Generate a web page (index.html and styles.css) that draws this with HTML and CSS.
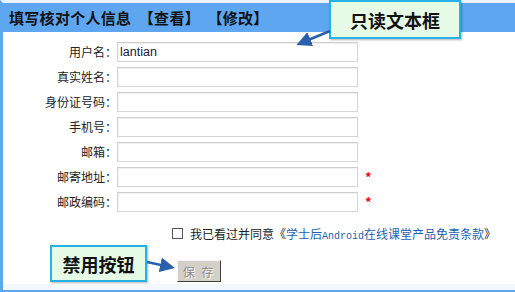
FILE: index.html
```html
<!DOCTYPE html>
<html lang="zh-CN">
  <head>
    <meta charset="utf-8">
    <title>填写核对个人信息</title>
    <link rel="stylesheet" href="styles.css">
  </head>
  <body>
    <div class="frame">
      <div class="header">填写核对个人信息&nbsp;&nbsp;【查看】&nbsp;&nbsp;【修改】</div>

      <div class="form">
        <label for="username">用户名：</label>
        <input type="text" id="username" value="lantian" readonly />
        <span></span>

        <label for="realname">真实姓名：</label>
        <input type="text" id="realname" />
        <span></span>

        <label for="idcard">身份证号码：</label>
        <input type="text" id="idcard" />
        <span></span>

        <label for="phone">手机号：</label>
        <input type="text" id="phone" />
        <span></span>

        <label for="email">邮箱：</label>
        <input type="text" id="email" />
        <span></span>

        <label for="address">邮寄地址：</label>
        <input type="text" id="address" />
        <span class="required">*</span>

        <label for="zipcode">邮政编码：</label>
        <input type="text" id="zipcode" />
        <span class="required">*</span>
      </div>

      <div class="agree">
        <input type="checkbox" id="agree" class="check" />
        <span>我已看过并同意《<a href="#">学士后<span class="mono">Android</span>在线课堂产品免责条款</a>》</span>
      </div>

      <div class="actions">
        <button class="save-btn" disabled>保&nbsp;存</button>
      </div>

      <div class="footer"></div>

      <!-- annotations -->
      <div class="callout callout-top">只读文本框</div>
      <div class="callout callout-bottom">禁用按钮</div>
      <svg class="arrows" width="515" height="292" viewBox="0 0 515 292">
        <defs>
          <marker id="head" markerWidth="6" markerHeight="6" refX="4" refY="3" orient="auto">
            <path d="M0,0 L6,3 L0,6 Z" fill="#2c5fab" />
          </marker>
        </defs>
        <line x1="330" y1="31" x2="301" y2="43" stroke="#2c5fab" stroke-width="2.5" marker-end="url(#head)" />
        <line x1="147" y1="262" x2="170" y2="267" stroke="#2c5fab" stroke-width="2.5" marker-end="url(#head)" />
      </svg>
    </div>
  </body>
</html>
```

FILE: styles.css
```css
*,
*:before,
*:after {
  box-sizing: border-box;
}

body {
  margin: 0;
  padding: 0;
  background-color: #fff;
  font-family: "Noto Sans CJK SC", "Liberation Sans", sans-serif;
  font-size: 12px;
  color: #222;
}

.frame {
  position: relative;
  width: 515px;
  height: 292px;
  border-left: 3px solid #5ea6ee;
  border-bottom: 2px solid #5ea6ee;
  border-top: 3px solid #eaf3fc;
}

.header {
  height: 29px;
  line-height: 29px;
  padding-left: 6px;
  background-color: #5ea7f0;
  color: #111;
  font-size: 15px;
  font-weight: bold;
  letter-spacing: 0.3px;
}

.form {
  display: grid;
  grid-template-columns: 114px 241px 1fr;
  row-gap: 5px;
  padding-top: 10px;
  align-items: center;
}

.form label {
  text-align: right;
  color: #222;
  line-height: 20px;
}

.form input {
  height: 20px;
  margin: 0;
  padding: 0 2px;
  border: 1px solid #d6d6d6;
  border-top-color: #cdcdcd;
  box-shadow: inset 1px 1px 0 #f0f0f0;
  font-family: "Liberation Sans", sans-serif;
  font-size: 12.5px;
  color: #1a1a3a;
  outline: none;
}

.required {
  color: #ff0000;
  padding-left: 7px;
  font-size: 13px;
  font-weight: bold;
  line-height: 20px;
}

.agree {
  display: flex;
  align-items: center;
  margin-top: 14px;
  padding-left: 169px;
  height: 14px;
}

.check {
  appearance: none;
  width: 11px;
  height: 11px;
  margin: 0 7px 0 0;
  border: 1px solid #555;
  background-color: #fff;
}

.agree a {
  color: #1d5fb0;
  text-decoration: none;
}

.mono {
  font-family: "Liberation Mono", monospace;
  font-size: 10px;
}

.actions {
  margin-top: 20px;
  padding-left: 174px;
}

.save-btn {
  width: 44px;
  height: 22px;
  margin: 0;
  padding: 0;
  background-color: #d4d0c8;
  border: 1px solid;
  border-color: #f4f4f4 #404040 #404040 #f4f4f4;
  font-family: "Noto Sans CJK SC", sans-serif;
  font-size: 12px;
  letter-spacing: 2px;
  color: #8c8a85;
  text-shadow: 1px 1px 0 #fff;
}

.footer {
  position: absolute;
  left: 0;
  right: 0;
  bottom: 0;
  height: 6px;
  background-color: #f3f8fd;
}

.callout {
  position: absolute;
  display: flex;
  align-items: center;
  justify-content: center;
  background-color: #e6fbe6;
  border: 2px solid #25b3e6;
  box-shadow: 1px 1px 2px rgba(0, 0, 0, 0.3);
  font-size: 18px;
  font-weight: bold;
  color: #111;
}

.callout-top {
  left: 326px;
  top: -3px;
  width: 132px;
  height: 39px;
}

.callout-bottom {
  left: 47px;
  top: 242px;
  width: 97px;
  height: 37px;
}

.arrows {
  position: absolute;
  left: -3px;
  top: -3px;
  pointer-events: none;
}
```
